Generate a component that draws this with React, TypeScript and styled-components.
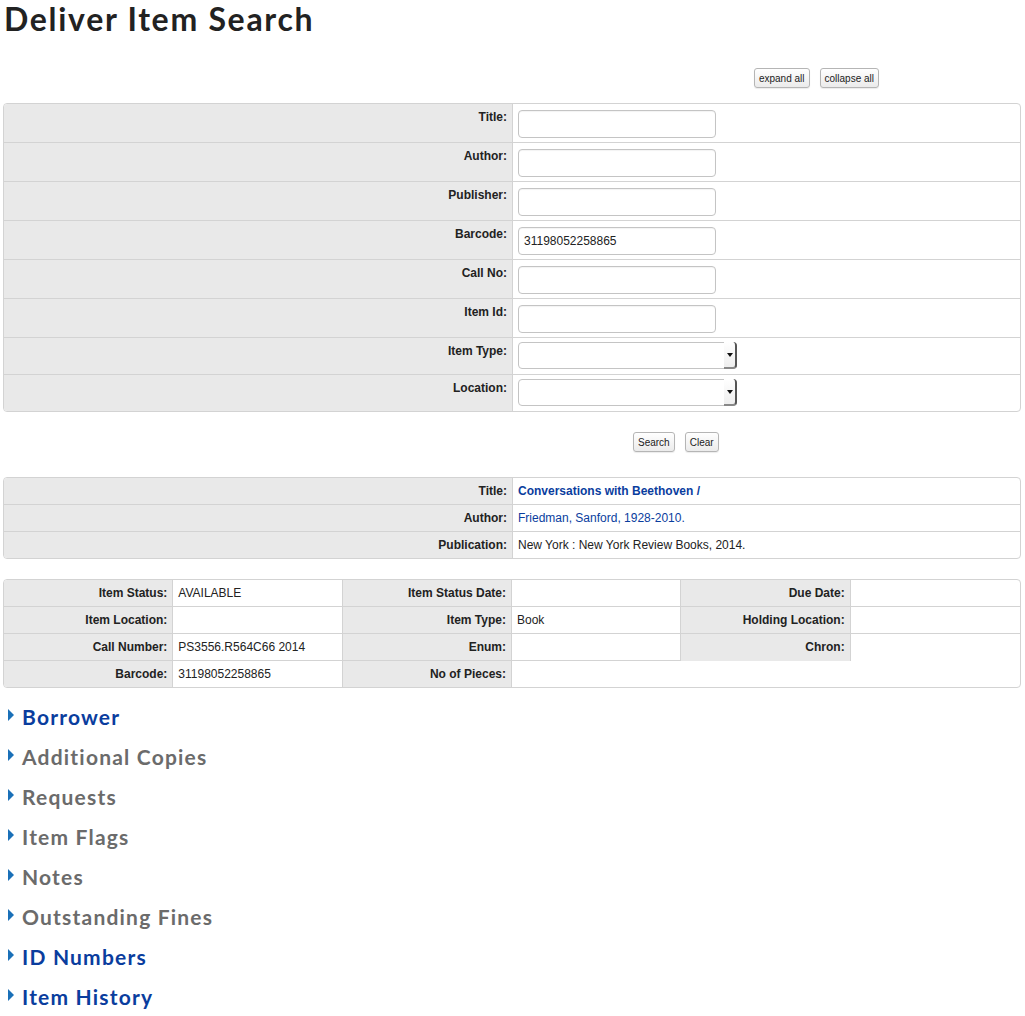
import React from "react";
import styled, { createGlobalStyle } from "styled-components";

const Global = createGlobalStyle`
  html, body { margin: 0; padding: 0; background: #fff; }
  body { font-family: "Liberation Sans", Arial, sans-serif; font-size: 12px; color: #222; }
`;

const Page = styled.div`
  padding: 0 4px 0 3px;
  width: 1018px;
`;

const Heading = styled.h1`
  margin: 0;
  padding: 0 0 0 1px;
  height: 40px;
  line-height: 38px;
  font-family: Lato, "Open Sans", sans-serif;
  font-weight: 700;
  font-size: 32px;
  letter-spacing: 1.7px;
  color: #222;
`;

const ToolBar = styled.div`
  display: flex;
  justify-content: flex-end;
  gap: 10px;
  padding: 28px 142px 15px 0;
`;

const Btn = styled.button`
  height: 20px;
  padding: 0 4px;
  font-family: "Liberation Sans", Arial, sans-serif;
  font-size: 10px;
  color: #222;
  background: linear-gradient(#ffffff, #ebebeb);
  border: 1px solid #b5b5b5;
  border-radius: 3px;
  box-shadow: 0 1px 1px rgba(0, 0, 0, 0.08);
`;

const Panel = styled.div<{ $cols: string }>`
  display: grid;
  grid-template-columns: ${(p) => p.$cols};
  border: 1px solid #d3d3d3;
  border-radius: 4px;
  overflow: hidden;
  background: #fff;
`;

const Label = styled.div<{ $h: number; $pt?: number; $last?: boolean; $noBottom?: boolean }>`
  box-sizing: border-box;
  height: ${(p) => (p.$last ? p.$h - 1 : p.$h)}px;
  background: #e9e9e9;
  border-right: 1px solid #d3d3d3;
  border-bottom: ${(p) => (p.$last || p.$noBottom ? "none" : "1px solid #d3d3d3")};
  text-align: right;
  font-weight: 700;
  color: #222;
  padding: ${(p) => p.$pt ?? 0}px 5px 0 0;
  line-height: ${(p) => (p.$pt !== undefined ? "14px" : `${p.$h - 1}px`)};
`;

const Value = styled.div<{ $h: number; $pt?: number; $last?: boolean; $noBottom?: boolean; $span?: number; $right?: boolean }>`
  box-sizing: border-box;
  height: ${(p) => (p.$last ? p.$h - 1 : p.$h)}px;
  border-bottom: ${(p) => (p.$last || p.$noBottom ? "none" : "1px solid #d3d3d3")};
  border-right: ${(p) => (p.$right ? "1px solid #d3d3d3" : "none")};
  padding: ${(p) => p.$pt ?? 0}px 0 0 5px;
  line-height: ${(p) => (p.$pt !== undefined ? "normal" : `${p.$h - 1}px`)};
  grid-column: ${(p) => (p.$span ? `span ${p.$span}` : "auto")};
  color: #222;
`;

const TextInput = styled.input`
  box-sizing: border-box;
  display: block;
  width: 198px;
  height: 28px;
  border: 1px solid #c4c4c4;
  border-radius: 4px;
  box-shadow: inset 0 1px 1px rgba(0, 0, 0, 0.05);
  padding: 0 5px;
  font-family: "Liberation Sans", Arial, sans-serif;
  font-size: 12px;
  color: #222;
  outline: none;
`;

const SelectWrap = styled.div`
  position: relative;
  width: 219px;
  height: 27px;
`;

const SelectBox = styled.select`
  box-sizing: border-box;
  appearance: none;
  -webkit-appearance: none;
  width: 100%;
  height: 100%;
  border: 1px solid #c4c4c4;
  border-radius: 4px;
  background: #fff;
  font-family: "Liberation Sans", Arial, sans-serif;
  font-size: 12px;
`;

const SelectArrow = styled.span`
  position: absolute;
  right: 0;
  top: 0;
  bottom: 0;
  width: 13px;
  border-right: 2px solid #555;
  border-bottom: 2px solid #888;
  border-radius: 0 4px 4px 0;
  background: linear-gradient(#fff, #eee);
  box-sizing: border-box;
  display: flex;
  align-items: center;
  justify-content: center;
  pointer-events: none;
  &::after {
    content: "";
    border-left: 3px solid transparent;
    border-right: 3px solid transparent;
    border-top: 4px solid #111;
  }
`;

const ActionBar = styled.div`
  display: flex;
  justify-content: flex-start;
  gap: 10px;
  padding: 20px 0 25px 630px;
`;

const Gap = styled.div<{ $h: number }>`
  height: ${(p) => p.$h}px;
`;

const LinkBold = styled.a`
  color: #0a3d9e;
  font-weight: 700;
  text-decoration: none;
`;

const Link = styled.a`
  color: #0a3d9e;
  text-decoration: none;
`;

const Sections = styled.ul`
  list-style: none;
  margin: 0;
  padding: 8px 0 0 5px;
`;

const SectionItem = styled.li<{ $active: boolean }>`
  display: flex;
  align-items: center;
  height: 40px;
  gap: 8px;
  font-family: Lato, "Open Sans", sans-serif;
  font-weight: 700;
  font-size: 21px;
  letter-spacing: 1.2px;
  color: ${(p) => (p.$active ? "#0a3d9e" : "#6b6b6b")};
  &::before {
    content: "";
    margin-top: -3px;
    border-top: 6px solid transparent;
    border-bottom: 6px solid transparent;
    border-left: 6px solid #1a70b8;
  }
`;

const formRows: { label: string; kind: "text" | "select"; value?: string }[] = [
  { label: "Title:", kind: "text" },
  { label: "Author:", kind: "text" },
  { label: "Publisher:", kind: "text" },
  { label: "Barcode:", kind: "text", value: "31198052258865" },
  { label: "Call No:", kind: "text" },
  { label: "Item Id:", kind: "text" },
  { label: "Item Type:", kind: "select" },
  { label: "Location:", kind: "select" },
];

const sections: { name: string; active: boolean }[] = [
  { name: "Borrower", active: true },
  { name: "Additional Copies", active: false },
  { name: "Requests", active: false },
  { name: "Item Flags", active: false },
  { name: "Notes", active: false },
  { name: "Outstanding Fines", active: false },
  { name: "ID Numbers", active: true },
  { name: "Item History", active: true },
];

export default function App() {
  return (
    <Page>
      <Global />
      <Heading>Deliver Item Search</Heading>
      <ToolBar>
        <Btn>expand all</Btn>
        <Btn>collapse all</Btn>
      </ToolBar>

      <Panel $cols="509px 1fr">
        {formRows.map((r, i) => {
          const last = i === formRows.length - 1;
          const h = r.kind === "text" ? 39 : 37;
          return (
            <React.Fragment key={r.label}>
              <Label $h={h} $pt={6} $last={last}>
                {r.label}
              </Label>
              <Value $h={h} $pt={r.kind === "text" ? 6 : 4} $last={last}>
                {r.kind === "text" ? (
                  <TextInput defaultValue={r.value ?? ""} />
                ) : (
                  <SelectWrap>
                    <SelectBox>
                      <option></option>
                    </SelectBox>
                    <SelectArrow />
                  </SelectWrap>
                )}
              </Value>
            </React.Fragment>
          );
        })}
      </Panel>

      <ActionBar>
        <Btn>Search</Btn>
        <Btn>Clear</Btn>
      </ActionBar>

      <Panel $cols="509px 1fr">
        <Label $h={27}>Title:</Label>
        <Value $h={27}>
          <LinkBold href="#">Conversations with Beethoven /</LinkBold>
        </Value>
        <Label $h={27}>Author:</Label>
        <Value $h={27}>
          <Link href="#">Friedman, Sanford, 1928-2010.</Link>
        </Value>
        <Label $h={27} $last>
          Publication:
        </Label>
        <Value $h={27} $last>
          New York : New York Review Books, 2014.
        </Value>
      </Panel>

      <Gap $h={20} />

      <Panel $cols="repeat(6, 1fr)">
        <Label $h={27}>Item Status:</Label>
        <Value $h={27} $right>AVAILABLE</Value>
        <Label $h={27}>Item Status Date:</Label>
        <Value $h={27} $right></Value>
        <Label $h={27}>Due Date:</Label>
        <Value $h={27}></Value>

        <Label $h={27}>Item Location:</Label>
        <Value $h={27} $right></Value>
        <Label $h={27}>Item Type:</Label>
        <Value $h={27} $right>Book</Value>
        <Label $h={27}>Holding Location:</Label>
        <Value $h={27}></Value>

        <Label $h={27}>Call Number:</Label>
        <Value $h={27} $right>PS3556.R564C66 2014</Value>
        <Label $h={27}>Enum:</Label>
        <Value $h={27} $right></Value>
        <Label $h={27} $noBottom>Chron:</Label>
        <Value $h={27} $noBottom></Value>

        <Label $h={27} $last>Barcode:</Label>
        <Value $h={27} $last $right>31198052258865</Value>
        <Label $h={27} $last>No of Pieces:</Label>
        <Value $h={27} $last $span={3}></Value>
      </Panel>

      <Sections>
        {sections.map((s) => (
          <SectionItem key={s.name} $active={s.active}>
            {s.name}
          </SectionItem>
        ))}
      </Sections>
    </Page>
  );
}
